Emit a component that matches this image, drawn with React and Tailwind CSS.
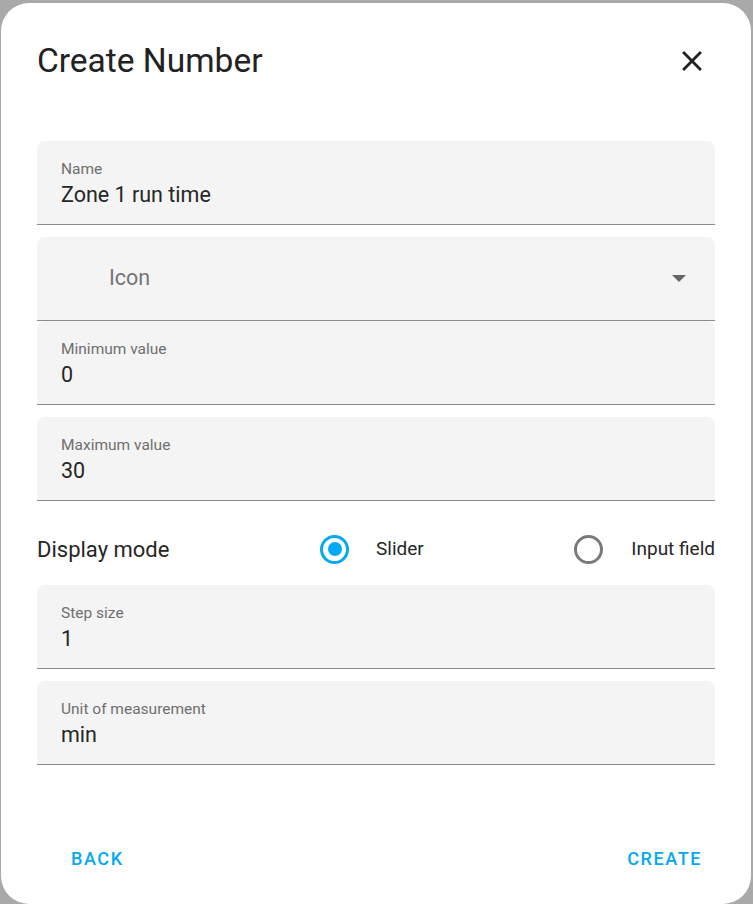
import { useState } from "react";

const Field = ({ label, value, className = "" }) => (
  <div className={`h-[84px] rounded-t-[8px] bg-[#f4f4f4] border-b border-[#8c8c8c] px-6 pt-[19px] ${className}`}>
    <div className="text-[15.5px] leading-[19px] text-[#6f6f6f]">{label}</div>
    <div className="mt-[3px] text-[21.5px] leading-[26px] text-[#262626]">{value}</div>
  </div>
);

const Radio = ({ checked }) => (
  <span
    className={`flex h-[29px] w-[29px] items-center justify-center rounded-full border-[3px] ${
      checked ? "border-[#03a9f4]" : "border-[#7a7a7a]"
    }`}
  >
    {checked && <span className="h-[14px] w-[14px] rounded-full bg-[#03a9f4]" />}
  </span>
);

export default function App() {
  const [mode, setMode] = useState("slider");

  return (
    <div className="h-[904px] w-[753px] overflow-hidden bg-[#a9a9a9] pt-[3px] pl-[1px] font-['Roboto',sans-serif]">
      <div className="flex h-[901px] w-[750px] flex-col rounded-[28px] bg-white">
        <header className="flex items-center justify-between pl-[36px] pr-[42px] pt-[38px]">
          <h1 className="text-[33.5px] leading-[40px] text-[#222]">Create Number</h1>
          <button className="h-[34px] w-[34px] text-[#212121]">
            <svg viewBox="0 0 24 24" className="h-[34px] w-[34px]" fill="currentColor">
              <path d="M19,6.41L17.59,5L12,10.59L6.41,5L5,6.41L10.59,12L5,17.59L6.41,19L12,13.41L17.59,19L19,17.59L13.41,12L19,6.41Z" />
            </svg>
          </button>
        </header>

        <div className="mt-[60px] flex flex-col pl-[36px] pr-[36px]">
          <Field label="Name" value="Zone 1 run time" />

          <div className="mt-[12px] flex h-[84px] items-center justify-between rounded-t-[8px] border-b border-[#8c8c8c] bg-[#f4f4f4] pl-[72px] pr-[29px]">
            <span className="text-[21.5px] text-[#757575]">Icon</span>
            <svg viewBox="0 0 14 7" className="h-[7px] w-[14px]" fill="#666">
              <path d="M0 0h14L7 7z" />
            </svg>
          </div>

          <Field label="Minimum value" value="0" />
          <Field label="Maximum value" value="30" className="mt-[12px]" />

          <div className="flex h-[84px] items-center pt-[12px] text-[#262626]">
            <span className="w-[283px] text-[22px]">Display mode</span>
            <button onClick={() => setMode("slider")} className="flex items-center">
              <Radio checked={mode === "slider"} />
              <span className="ml-[27px] text-[19px]">Slider</span>
            </button>
            <button onClick={() => setMode("input")} className="ml-auto flex items-center">
              <Radio checked={mode === "input"} />
              <span className="ml-[28px] text-[19px]">Input field</span>
            </button>
          </div>

          <Field label="Step size" value="1" />
          <Field label="Unit of measurement" value="min" className="mt-[12px]" />
        </div>

        <footer className="mt-auto flex items-center justify-between pb-[32px] pl-[70px] pr-[49px]">
          <button className="text-[18px] font-medium tracking-[1.6px] text-[#03a9f4]">BACK</button>
          <button className="text-[18px] font-medium tracking-[1.6px] text-[#03a9f4]">CREATE</button>
        </footer>
      </div>
    </div>
  );
}
